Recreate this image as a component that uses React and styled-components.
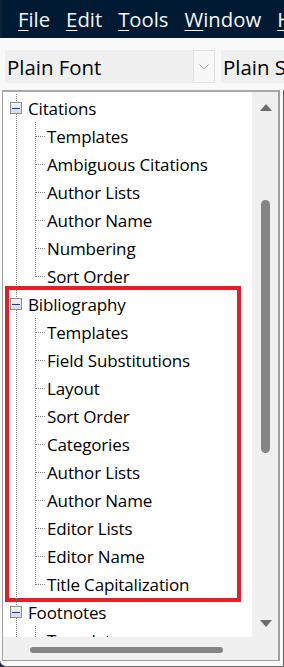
import React from "react";
import styled, { createGlobalStyle } from "styled-components";

const Global = createGlobalStyle`
  html, body { margin: 0; padding: 0; background: #1c2733; }
  body { width: 284px; height: 667px; overflow: hidden; font-family: "Open Sans", "Noto Sans", sans-serif; }
  #root { width: 284px; height: 667px; }
`;

const Window = styled.div`
  width: 284px;
  height: 667px;
  display: flex;
  flex-direction: column;
  background: #f9f9f9;
  border-bottom-left-radius: 7px;
  overflow: hidden;
`;

const MenuBar = styled.div`
  height: 38px;
  flex: none;
  background: #011a33;
  border-left: 2px solid #0f2235;
  display: flex;
  align-items: center;
  padding-left: 8px;
  white-space: nowrap;
  overflow: hidden;
`;

const MenuItem = styled.span`
  color: #f4f6f8;
  font-size: 20.3px;
  padding: 0 8px;
  line-height: 38px;
  u { text-decoration: underline; text-underline-offset: 3px; text-decoration-thickness: 1px; }
`;

const Toolbar = styled.div`
  flex: none;
  height: 52px;
  box-sizing: border-box;
  padding: 12px 0 7px 5px;
  display: flex;
  gap: 6px;
  overflow: hidden;
`;

const Combo = styled.div`
  flex: none;
  width: ${(p) => p.$width}px;
  height: 33px;
  background: #efefef;
  display: flex;
  align-items: center;
  box-sizing: border-box;
`;

const ComboText = styled.span`
  flex: 1;
  padding-left: 2px;
  font-size: 20.4px;
  color: #000;
  white-space: nowrap;
  overflow: hidden;
`;

const ComboButton = styled.div`
  flex: none;
  width: 22px;
  height: 33px;
  box-sizing: border-box;
  background: #f7f7f7;
  border: 1px solid #e2e2e2;
  display: flex;
  align-items: center;
  justify-content: center;
`;

const Body = styled.div`
  flex: 1;
  display: flex;
  padding: 0 3px 5px 2px;
  border-right: 1px solid #5a5a5a;
  border-bottom: 1px solid #6a6a6a;
  border-bottom-left-radius: 7px;
  min-height: 0;
`;

const TreePanel = styled.div`
  flex: 1;
  display: grid;
  grid-template-columns: 1fr 26px;
  grid-template-rows: 1fr 23px;
  border: 1px solid #a0a0a0;
  border-top: 2px solid #a8a8a8;
  border-right: 2px solid #a0a0a0;
  min-height: 0;
`;

const TreeContent = styled.div`
  background: #fff;
  overflow: hidden;
  padding-top: 2px;
`;

const dot = "#7c7c7c";
const vLine = `repeating-linear-gradient(to bottom, ${dot} 0 1px, transparent 1px 2px)`;
const hLine = `repeating-linear-gradient(to right, ${dot} 0 1px, transparent 1px 2px)`;

const Row = styled.div`
  height: 28px;
  display: flex;
  align-items: center;
  white-space: nowrap;
`;

const RootGutter = styled.div`
  flex: none;
  width: 25px;
  height: 28px;
  box-sizing: border-box;
  padding-left: 7px;
  display: flex;
  align-items: center;
  background: ${vLine} 13px 0 / 1px 100% no-repeat;
`;

const ChildGutter = styled.div`
  flex: none;
  width: 44px;
  height: 28px;
  background:
    ${vLine} 13px 0 / 1px 100% no-repeat,
    ${vLine} 32px 0 / 1px ${(p) => (p.$last ? "15px" : "100%")} no-repeat,
    ${hLine} 33px 14px / 10px 1px no-repeat;
`;

const Expander = styled.div`
  width: 12px;
  height: 12px;
  box-sizing: border-box;
  border: 1px solid #8e8e8e;
  background: linear-gradient(#f4f4f4, #dcdcdc);
  display: flex;
  align-items: center;
  justify-content: center;
  &::after {
    content: "";
    width: 8px;
    height: 1px;
    background: #1b3c93;
  }
`;

const Label = styled.span`
  font-size: 17px;
  letter-spacing: -0.15px;
  color: #000;
`;

const Group = styled.div`
  position: relative;
`;

const Highlight = styled.div`
  position: absolute;
  top: -4px;
  bottom: -4px;
  left: 2px;
  right: 11px;
  border: 4px solid #e81d25;
  pointer-events: none;
`;

const VScroll = styled.div`
  background: #f0f0f0;
  display: flex;
  flex-direction: column;
  align-items: center;
  min-height: 0;
`;

const Arrow = styled.div`
  flex: none;
  height: ${(p) => (p.$down ? 26 : 30)}px;
  display: flex;
  align-items: center;
  justify-content: center;
  padding-left: 1px;
`;

const VTrack = styled.div`
  flex: 1;
  padding-top: 78px;
`;

const VThumb = styled.div`
  width: 9px;
  height: 253px;
  border-radius: 5px;
  background: #858585;
`;

const HScroll = styled.div`
  background: #f0f0f0;
  padding-left: 27px;
  display: flex;
  align-items: center;
  padding-top: 3px;
  box-sizing: border-box;
`;

const HThumb = styled.div`
  width: 193px;
  height: 6px;
  border-radius: 3px;
  background: #858585;
`;

const Corner = styled.div`
  background: #f0f0f0;
`;

const Tri = ({ down }) => (
  <svg width="12" height="8" viewBox="0 0 12 8">
    <path d={down ? "M0 0 H12 L6 7 Z" : "M0 8 H12 L6 1 Z"} fill="#6b6b6b" />
  </svg>
);

const menus = [
  ["F", "ile"],
  ["E", "dit"],
  ["T", "ools"],
  ["W", "indow"],
  ["H", "elp"],
];

const tree = [
  {
    name: "Citations",
    children: ["Templates", "Ambiguous Citations", "Author Lists", "Author Name", "Numbering", "Sort Order"],
  },
  {
    name: "Bibliography",
    highlight: true,
    children: [
      "Templates",
      "Field Substitutions",
      "Layout",
      "Sort Order",
      "Categories",
      "Author Lists",
      "Author Name",
      "Editor Lists",
      "Editor Name",
      "Title Capitalization",
    ],
  },
  { name: "Footnotes", children: ["Templates", "Field Substitutions"] },
];

function Node({ node }) {
  return (
    <Group>
      <Row>
        <RootGutter>
          <Expander />
        </RootGutter>
        <Label>{node.name}</Label>
      </Row>
      {node.children.map((c, i) => (
        <Row key={i}>
          <ChildGutter $last={i === node.children.length - 1} />
          <Label>{c}</Label>
        </Row>
      ))}
      {node.highlight && <Highlight />}
    </Group>
  );
}

export default function App() {
  return (
    <>
      <Global />
      <Window>
        <MenuBar>
          {menus.map(([a, b]) => (
            <MenuItem key={a}>
              <u>{a}</u>
              {b}
            </MenuItem>
          ))}
        </MenuBar>
        <Toolbar>
          <Combo $width={210}>
            <ComboText>Plain Font</ComboText>
            <ComboButton>
              <svg width="10" height="6" viewBox="0 0 10 6">
                <path d="M0.5 0.5 L5 5 L9.5 0.5" fill="none" stroke="#a6a6a6" strokeWidth="1" />
              </svg>
            </ComboButton>
          </Combo>
          <Combo $width={120}>
            <ComboText>Plain Size</ComboText>
          </Combo>
        </Toolbar>
        <Body>
          <TreePanel>
            <TreeContent>
              {tree.map((n) => (
                <Node key={n.name} node={n} />
              ))}
            </TreeContent>
            <VScroll>
              <Arrow>
                <Tri />
              </Arrow>
              <VTrack>
                <VThumb />
              </VTrack>
              <Arrow $down>
                <Tri down />
              </Arrow>
            </VScroll>
            <HScroll>
              <HThumb />
            </HScroll>
            <Corner />
          </TreePanel>
        </Body>
      </Window>
    </>
  );
}
